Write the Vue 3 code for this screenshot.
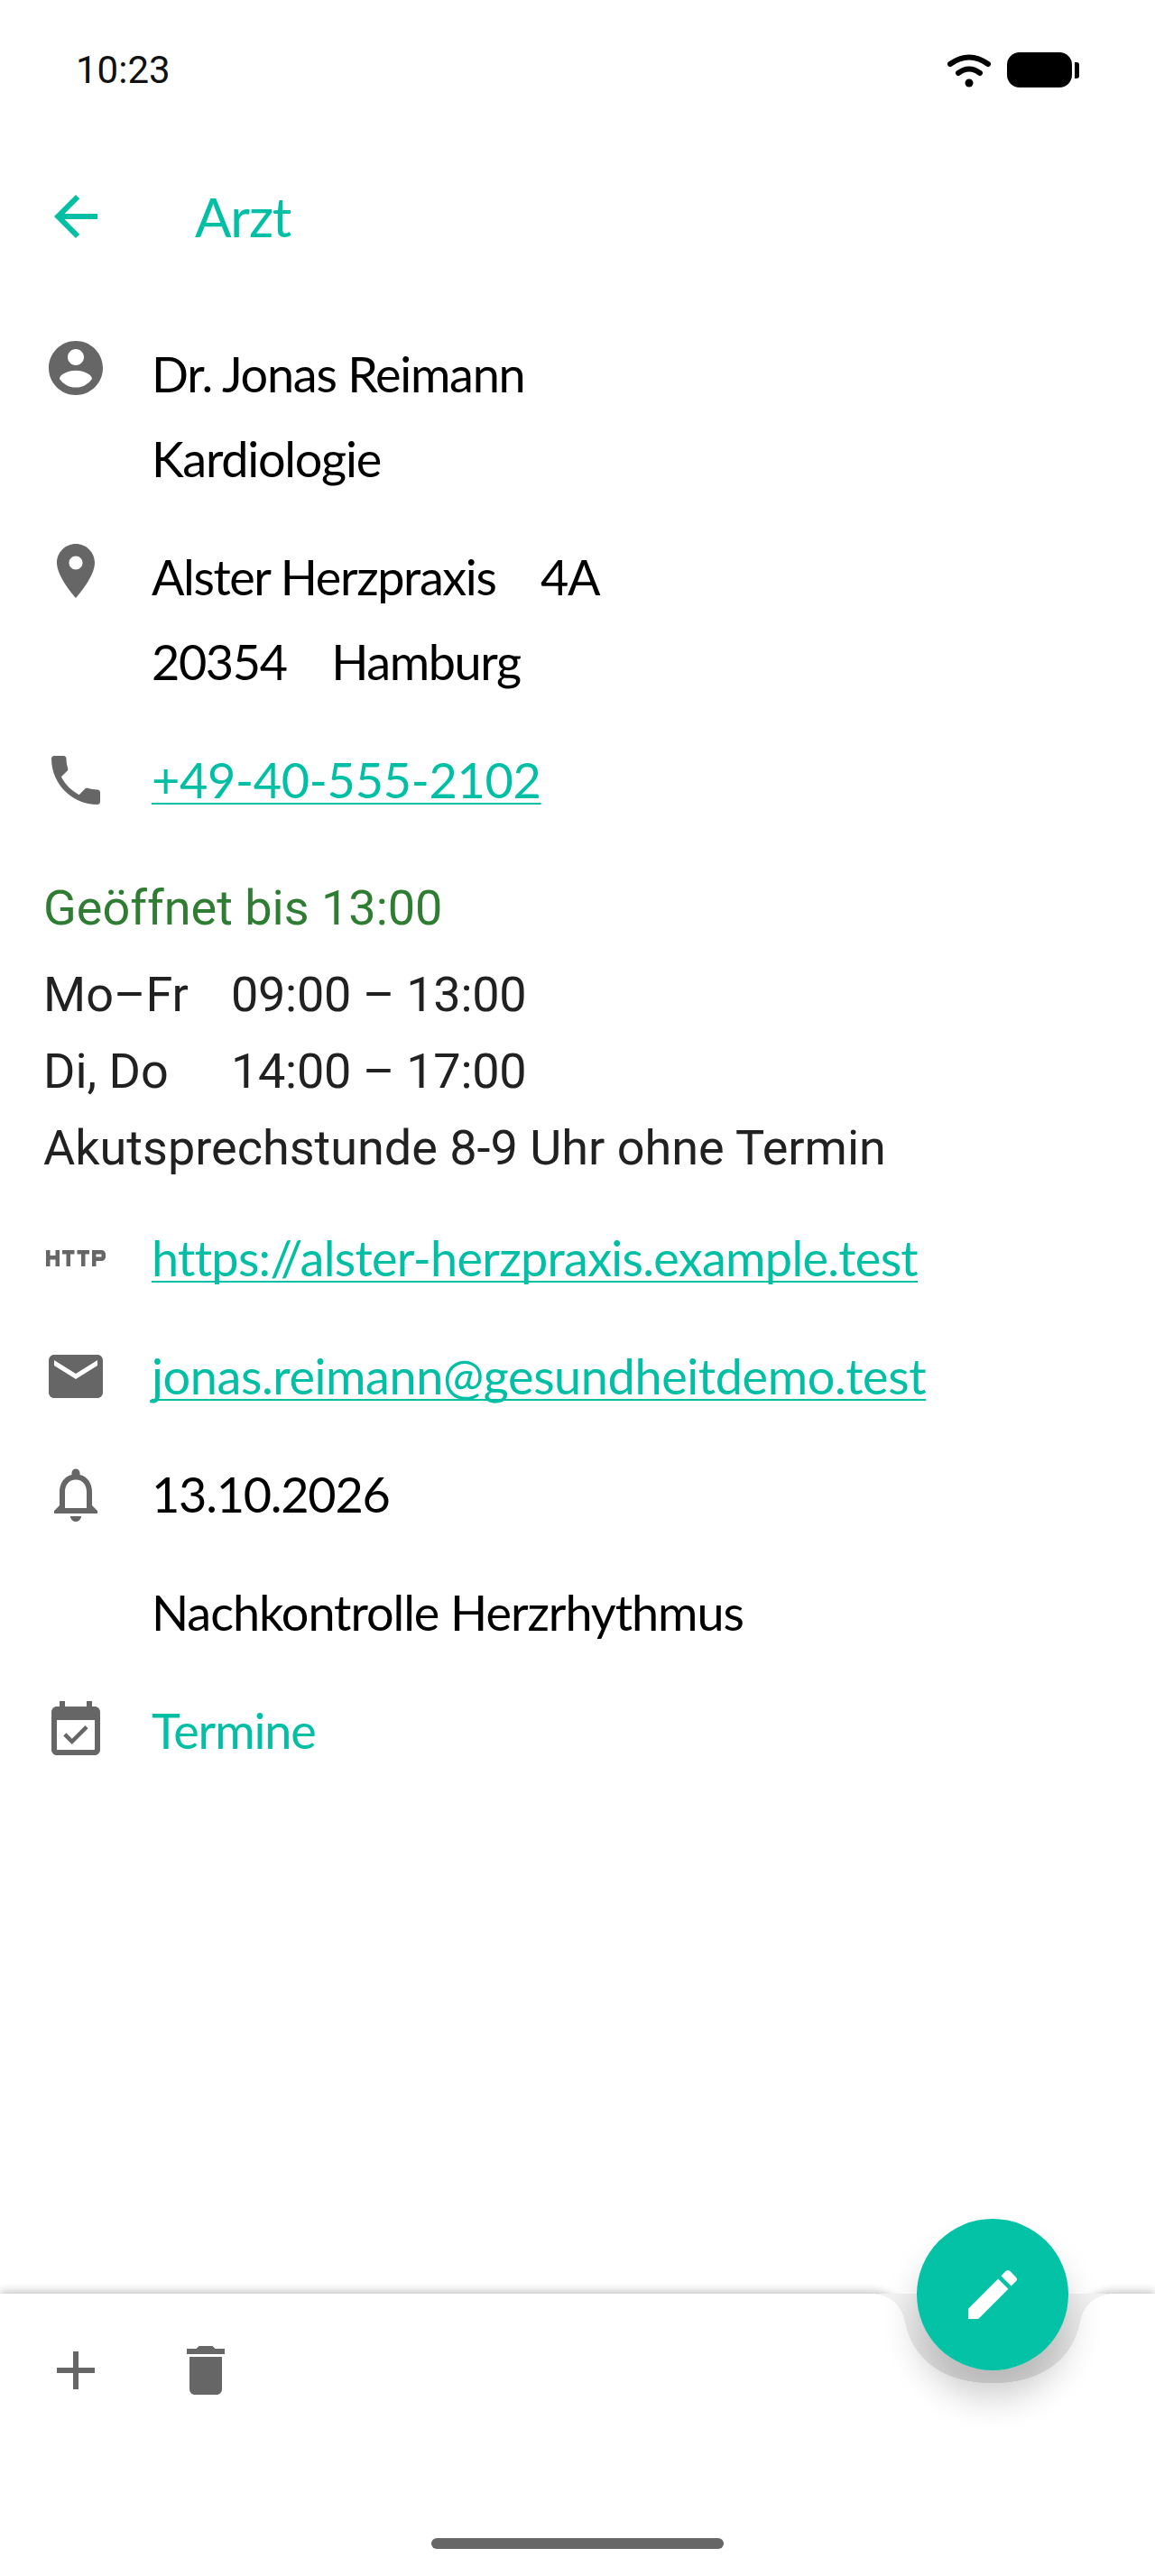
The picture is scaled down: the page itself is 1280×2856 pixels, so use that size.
<template>
  <div class="page">
    <div class="status">
      <span class="time">10:23</span>
      <div class="status-icons">
        <svg class="wifi" width="48" height="38" viewBox="0 0 48 38">
          <path d="M3 12Q24 -3 45 12" fill="none" stroke="#000" stroke-width="6" stroke-linecap="round" />
          <path d="M12 22Q24 13 36 22" fill="none" stroke="#000" stroke-width="6" stroke-linecap="round" />
          <circle cx="24" cy="33" r="4.5" fill="#000" />
        </svg>
        <div class="battery"></div>
        <div class="nub"></div>
      </div>
    </div>

    <header class="toolbar">
      <svg class="icon" viewBox="0 0 24 24" fill="#00bfa5"><path :d="icons.back" /></svg>
      <span class="title">Arzt</span>
    </header>

    <main class="content">
      <div class="row" v-for="row in topRows" :key="row.icon">
        <svg class="icon" :class="{ lower: row.link }" viewBox="0 0 24 24"><path :d="icons[row.icon]" /></svg>
        <div class="lines">
          <div v-for="line in row.lines" :key="line" :class="{ link: row.link }" :style="{ letterSpacing: row.spacing }"><span>{{ line }}</span></div>
        </div>
      </div>

      <div class="hours">
        <div class="open">Geöffnet bis 13:00</div>
        <div v-for="h in hours" :key="h.day" class="hour"><span class="day">{{ h.day }}</span><span class="span-time">{{ h.time }}</span></div>
        <div class="hour">Akutsprechstunde 8-9 Uhr ohne Termin</div>
      </div>

      <div class="row" v-for="row in bottomRows" :key="row.text">
        <svg class="icon lower" viewBox="0 0 24 24"><path v-if="row.icon" :d="icons[row.icon]" /></svg>
        <div class="lines">
          <div :class="{ link: row.link, teal: row.teal }" :style="{ letterSpacing: row.spacing }"><span>{{ row.text }}</span></div>
        </div>
      </div>
    </main>

    <footer class="bottom">
      <svg class="bar-bg" width="1280" height="333" viewBox="0 0 1280 333">
        <defs>
          <filter id="soft" x="-5%" y="-10%" width="110%" height="120%"><feGaussianBlur stdDeviation="5" /></filter>
          <linearGradient id="well" x1="0" y1="0" x2="0" y2="1">
            <stop offset="0" stop-color="#f2f2f2" />
            <stop offset="1" stop-color="#e4e4e4" />
          </linearGradient>
        </defs>
        <path :d="barPath" fill="#000" opacity="0.22" filter="url(#soft)" transform="translate(0 -3)" />
        <path :d="barPath" fill="#fff" />
        <path :d="wellPath" fill="url(#well)" />
      </svg>
      <div class="fab-shadow"></div>
      <button class="fab" type="button">
        <svg width="72" height="72" viewBox="0 0 24 24" fill="#fff"><path :d="icons.edit" /></svg>
      </button>
      <div class="actions">
        <svg class="icon" viewBox="0 0 24 24"><path :d="icons.plus" /></svg>
        <svg class="icon" viewBox="0 0 24 24"><path :d="icons.trash" /></svg>
      </div>
      <div class="home"></div>
    </footer>
  </div>
</template>

<script setup>
const icons = {
  back: "M20 11H7.83l5.59-5.59L12 4l-8 8 8 8 1.41-1.41L7.83 13H20v-2z",
  person:
    "M12 2C6.48 2 2 6.48 2 12s4.48 10 10 10 10-4.48 10-10S17.52 2 12 2zm0 3c1.66 0 3 1.34 3 3s-1.34 3-3 3-3-1.34-3-3 1.34-3 3-3zm0 14.2c-2.5 0-4.71-1.28-6-3.22.03-1.99 4-3.08 6-3.08 1.99 0 5.97 1.09 6 3.08-1.29 1.94-3.5 3.22-6 3.22z",
  pin: "M12 2C8.13 2 5 5.13 5 9c0 5.25 7 13 7 13s7-7.75 7-13c0-3.87-3.13-7-7-7zm0 9.5c-1.38 0-2.5-1.12-2.5-2.5s1.12-2.5 2.5-2.5 2.5 1.12 2.5 2.5-1.12 2.5-2.5 2.5z",
  phone:
    "M6.62 10.79c1.44 2.83 3.76 5.14 6.59 6.59l2.2-2.2c.27-.27.67-.36 1.02-.24 1.12.37 2.33.57 3.57.57.55 0 1 .45 1 1V20c0 .55-.45 1-1 1-9.39 0-17-7.61-17-17 0-.55.45-1 1-1h3.5c.55 0 1 .45 1 1 0 1.25.2 2.45.57 3.57.11.35.03.74-.25 1.02l-2.2 2.2z",
  http: "M4.5 11h-2V9H1v6h1.5v-2.5h2V15H6V9H4.5v2zm2.5-.5h1.5V15H10v-4.5h1.5V9H7v1.5zm5.5 0H14V15h1.5v-4.5H17V9h-4.5v1.5zm9-1.5H18v6h1.5v-2h2c.8 0 1.5-.7 1.5-1.5v-1c0-.8-.7-1.5-1.5-1.5zm0 2.5h-2v-1h2v1z",
  mail: "M20 4H4c-1.1 0-1.99.9-1.99 2L2 18c0 1.1.9 2 2 2h16c1.1 0 2-.9 2-2V6c0-1.1-.9-2-2-2zm0 4l-8 5-8-5V6l8 5 8-5v2z",
  bell: "M12 22c1.1 0 2-.9 2-2h-4c0 1.1.9 2 2 2zm6-6v-5c0-3.07-1.63-5.64-4.5-6.32V4c0-.83-.67-1.5-1.5-1.5s-1.5.67-1.5 1.5v.68C7.64 5.36 6 7.92 6 11v5l-2 2v1h16v-1l-2-2zm-2 1H8v-6c0-2.48 1.51-4.5 4-4.5s4 2.02 4 4.5v6z",
  calendar:
    "M16.53 11.06L15.47 10l-4.88 4.88-2.12-2.12-1.06 1.06L10.59 17l5.94-5.94zM19 3h-1V1h-2v2H8V1H6v2H5c-1.11 0-1.99.9-1.99 2L3 19c0 1.1.89 2 2 2h14c1.1 0 2-.9 2-2V5c0-1.1-.9-2-2-2zm0 16H5V8h14v11z",
  plus: "M19 13h-6v6h-2v-6H5v-2h6V5h2v6h6v2z",
  trash: "M6 19c0 1.1.9 2 2 2h8c1.1 0 2-.9 2-2V7H6v12zM19 4h-3.5l-1-1h-5l-1 1H5v2h14V4z",
  edit: "M3 17.25V21h3.75L17.81 9.94l-3.75-3.75L3 17.25zM20.71 7.04c.39-.39.39-1.02 0-1.41l-2.34-2.34c-.39-.39-1.02-.39-1.41 0l-1.83 1.83 3.75 3.75 1.83-1.83z",
};

// spacing per row, the fallback font is not the same width as the original
const topRows = [
  { icon: "person", lines: ["Dr. Jonas Reimann", "Kardiologie"], spacing: "-1.25px" },
  { icon: "pin", lines: ["Alster Herzpraxis\u00a0\u00a0\u00a0 4A", "20354\u00a0\u00a0\u00a0 Hamburg"], spacing: "-1.4px" },
  { icon: "phone", lines: ["+49-40-555-2102"], link: true, spacing: "-0.3px" },
];

const hours = [
  { day: "Mo–Fr", time: "09:00 – 13:00" },
  { day: "Di, Do", time: "14:00 – 17:00" },
];

const bottomRows = [
  { icon: "http", text: "https://alster-herzpraxis.example.test", link: true, spacing: "-0.7px" },
  { icon: "mail", text: "jonas.reimann@gesundheitdemo.test", link: true, spacing: "-0.4px" },
  { icon: "bell", text: "13.10.2026", spacing: "-1.25px" },
  { icon: "", text: "Nachkontrolle Herzrhythmus", spacing: "-1.05px" },
  { icon: "calendar", text: "Termine", teal: true, spacing: "-1.1px" },
];

// bar outline with the round cradle for the fab, y is relative to the svg top (bar top = 20)
const barPath =
  "M0 20H966C985 20 998 30 1003 50C1012 98 1052 119 1100 119C1148 119 1188 98 1197 50C1202 30 1215 20 1234 20H1280V333H0Z";
const wellPath =
  "M966 20C985 20 998 30 1003 50C1012 98 1052 119 1100 119C1148 119 1188 98 1197 50C1202 30 1215 20 1234 20Z";
</script>

<style scoped>
.page {
  width: 1280px;
  height: 2856px;
  display: flex;
  flex-direction: column;
  background: #fff;
  font-family: Lato, "Liberation Sans", sans-serif;
  overflow: hidden;
}

.status {
  height: 152px;
  box-sizing: border-box;
  padding: 58px 84px 0 84px;
  display: flex;
  justify-content: space-between;
  align-items: flex-start;
}

.time {
  font-family: Roboto, sans-serif;
  font-size: 42px;
  line-height: 40px;
  color: #111;
}

.status-icons {
  display: flex;
  align-items: center;
}

.wifi {
  margin-right: 18px;
}

.battery {
  width: 72px;
  height: 39px;
  border-radius: 14px;
  background: #000;
}

.nub {
  width: 5px;
  height: 18px;
  margin-left: 3px;
  border-radius: 0 3px 3px 0;
  background: #000;
}

.toolbar {
  height: 176px;
  display: flex;
  align-items: center;
  padding-left: 48px;
  box-sizing: border-box;
}

.icon {
  width: 72px;
  height: 72px;
  flex: none;
  fill: #666;
}

.toolbar .icon {
  fill: #00bfa5;
}

.title {
  margin-left: 96px;
  font-size: 60px;
  font-weight: 400;
  letter-spacing: -1.2px;
  color: #00bfa5;
}

.content {
  flex: 1;
  padding: 40px 0 0 48px;
}

.row {
  display: flex;
  gap: 48px;
  margin-bottom: 37px;
}

.row .icon {
  margin-top: 4px;
}

.row .icon.lower {
  margin-top: 11px;
}

.lines {
  font-size: 54px;
  line-height: 94px;
  color: #000;
  white-space: nowrap;
}

.link,
.teal {
  color: #00bfa5;
}

.link span {
  text-decoration: underline;
  text-decoration-thickness: 2px;
  text-underline-offset: 5px;
  text-decoration-skip-ink: none;
}

.hours {
  font-family: Roboto, sans-serif;
  font-size: 54px;
  color: #212121;
  margin-top: 50px;
  margin-bottom: 33px;
}

.open {
  color: #2e7d32;
  line-height: 90px;
  margin-bottom: 8px;
}

.hour {
  line-height: 85px;
  white-space: nowrap;
}

.day {
  display: inline-block;
  width: 208px;
}

.span-time {
  letter-spacing: -0.3px;
}

.bottom {
  position: relative;
  height: 313px;
  flex: none;
}

.bar-bg {
  position: absolute;
  left: 0;
  top: -20px;
}

.fab-shadow {
  position: absolute;
  left: 1016px;
  top: -83px;
  width: 168px;
  height: 168px;
  border-radius: 50%;
  box-shadow: 0 30px 40px rgba(0, 0, 0, 0.2);
}

.fab {
  position: absolute;
  left: 1016px;
  top: -83px;
  width: 168px;
  height: 168px;
  border: none;
  padding: 0;
  border-radius: 50%;
  background: #03c2a6;
  display: flex;
  align-items: center;
  justify-content: center;
}

.actions {
  position: relative;
  display: flex;
  gap: 72px;
  padding: 49px 0 0 48px;
}

.home {
  position: absolute;
  left: 478px;
  top: 271px;
  width: 324px;
  height: 12px;
  border-radius: 6px;
  background: #666;
}
</style>
